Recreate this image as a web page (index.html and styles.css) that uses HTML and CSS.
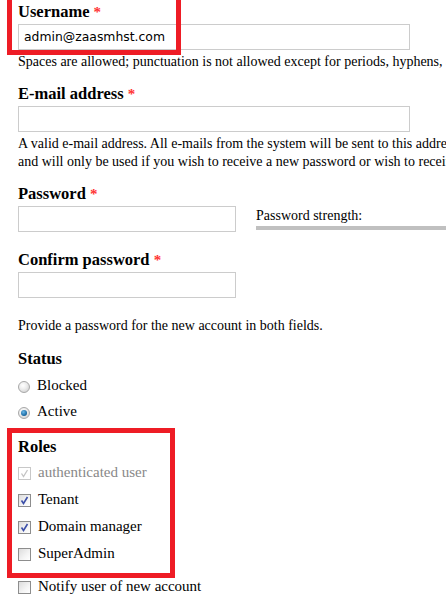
FILE: index.html
```html
<!DOCTYPE html>
<html>
<head>
<meta charset="utf-8">
<link rel="stylesheet" href="styles.css">
</head>
<body>
<form class="form">
  <div class="field field-user">
    <label class="label">Username <span class="req">*</span></label>
    <div class="input input-wide">admin@zaasmhst.com</div>
    <div class="desc">Spaces are allowed; punctuation is not allowed except for periods, hyphens, apostrophes, and underscores.</div>
  </div>

  <div class="field">
    <label class="label">E-mail address <span class="req">*</span></label>
    <div class="input input-wide"></div>
    <div class="desc">A valid e-mail address. All e-mails from the system will be sent to this address. The e-mail address is not made public<br>and will only be used if you wish to receive a new password or wish to receive certain news or notifications by e-mail.</div>
  </div>

  <div class="field field-pass">
    <div class="pass-col">
      <label class="label">Password <span class="req">*</span></label>
      <div class="input input-short"></div>
    </div>
    <div class="strength">
      <div class="strength-text">Password strength:</div>
      <div class="strength-bar"></div>
    </div>
  </div>

  <div class="field field-confirm">
    <label class="label">Confirm password <span class="req">*</span></label>
    <div class="input input-short"></div>
  </div>

  <div class="desc desc-provide">Provide a password for the new account in both fields.</div>

  <div class="group group-status">
    <div class="label">Status</div>
    <div class="option"><span class="radio"></span><span>Blocked</span></div>
    <div class="option"><span class="radio radio-on"><span class="dot"></span></span><span>Active</span></div>
  </div>

  <div class="group group-roles">
    <div class="label">Roles</div>
    <div class="option option-disabled"><span class="check check-disabled"><svg viewBox="0 0 13 13" width="13" height="13"><path d="M3.5 6.5 L5.5 9.5 L9.5 3" fill="none" stroke="#c4c4c4" stroke-width="1.3"/></svg></span><span>authenticated user</span></div>
    <div class="option"><span class="check"><svg viewBox="0 0 13 13" width="13" height="13"><path d="M3.5 6.5 L5.5 9.5 L9.5 3" fill="none" stroke="#3c4fa8" stroke-width="1.6"/></svg></span><span>Tenant</span></div>
    <div class="option"><span class="check"><svg viewBox="0 0 13 13" width="13" height="13"><path d="M3.5 6.5 L5.5 9.5 L9.5 3" fill="none" stroke="#3c4fa8" stroke-width="1.6"/></svg></span><span>Domain manager</span></div>
    <div class="option"><span class="check"></span><span>SuperAdmin</span></div>
  </div>

  <div class="option option-notify"><span class="check"></span><span>Notify user of new account</span></div>
</form>

<div class="mark mark-user"></div>
<div class="mark mark-roles"></div>
</body>
</html>
```

FILE: styles.css
```css
html, body {
  margin: 0;
  padding: 0;
  background: #fff;
  overflow: hidden;
}
body {
  width: 446px;
  height: 602px;
  position: relative;
  font-family: "Liberation Serif", "Times New Roman", serif;
  font-size: 14px;
  color: #000;
}
.form {
  display: flex;
  flex-direction: column;
  padding: 3px 0 0 18px;
  white-space: nowrap;
}
.label {
  display: block;
  font-weight: bold;
  font-size: 16.5px;
  line-height: 18px;
  height: 18px;
  color: #000;
}
.req {
  color: #f33;
  font-weight: bold;
  font-size: 15px;
}
.input {
  box-sizing: border-box;
  height: 26px;
  border: 1px solid #ccc;
  margin-top: 3px;
  font-family: "DejaVu Sans", sans-serif;
  font-size: 12.4px;
  line-height: 24px;
  padding-left: 5px;
  color: #000;
}
.input-wide { width: 392px; }
.input-short { width: 218px; }
.desc {
  font-size: 14px;
  line-height: 18px;
  margin-top: 3px;
}
.field + .field { margin-top: 14px; }
.field-pass {
  display: flex;
  align-items: flex-start;
  gap: 20px;
}
.strength {
  margin-top: 24px;
  flex: 1;
}
.strength-text {
  font-size: 14px;
  line-height: 14px;
}
.strength-bar {
  height: 4px;
  background: #c0c0c0;
  margin-top: 3px;
}
.field.field-confirm { margin-top: 19px; }
.desc-provide { margin-top: 19px; }
.group { display: flex; flex-direction: column; }
.group-status { margin-top: 15px; }
.group-roles { margin-top: 18px; }
.option {
  display: flex;
  align-items: center;
  gap: 7px;
  font-size: 15px;
  line-height: 18px;
  height: 18px;
  margin-top: 8px;
}
.group-roles .option { margin-top: 9px; }
.group-roles .label + .option { margin-top: 6.5px; }
.option-disabled { color: #888; }
.form > .option-notify { margin-top: 15px; }
.radio {
  box-sizing: border-box;
  width: 12px;
  height: 12px;
  border-radius: 50%;
  border: 1px solid #a8a8a8;
  background: radial-gradient(circle at 40% 35%, #fff 0%, #eee 40%, #c8c8c8 100%);
  display: flex;
  align-items: center;
  justify-content: center;
  margin-top: 3px;
  flex: none;
}
.dot {
  width: 6px;
  height: 6px;
  border-radius: 50%;
  background: radial-gradient(circle at 40% 35%, #6ab8e8 0%, #1f6fa8 60%, #0b3f6a 100%);
}
.check {
  box-sizing: border-box;
  width: 13px;
  height: 13px;
  border: 1px solid #8d8d8d;
  background: linear-gradient(135deg, #dcdcdc 0%, #f4f4f4 60%, #fff 100%);
  flex: none;
  display: flex;
  margin-top: 3px;
}
.check svg { display: block; margin: -1px; }
.check-disabled {
  border-color: #c8c8c8;
  background: #fff;
}
.mark {
  position: absolute;
  border: 5px solid #ee1c25;
}
.mark-user {
  left: 7px;
  top: -5px;
  width: 164px;
  height: 50px;
}
.mark-roles {
  left: 7px;
  top: 428px;
  width: 158px;
  height: 140px;
}
```
